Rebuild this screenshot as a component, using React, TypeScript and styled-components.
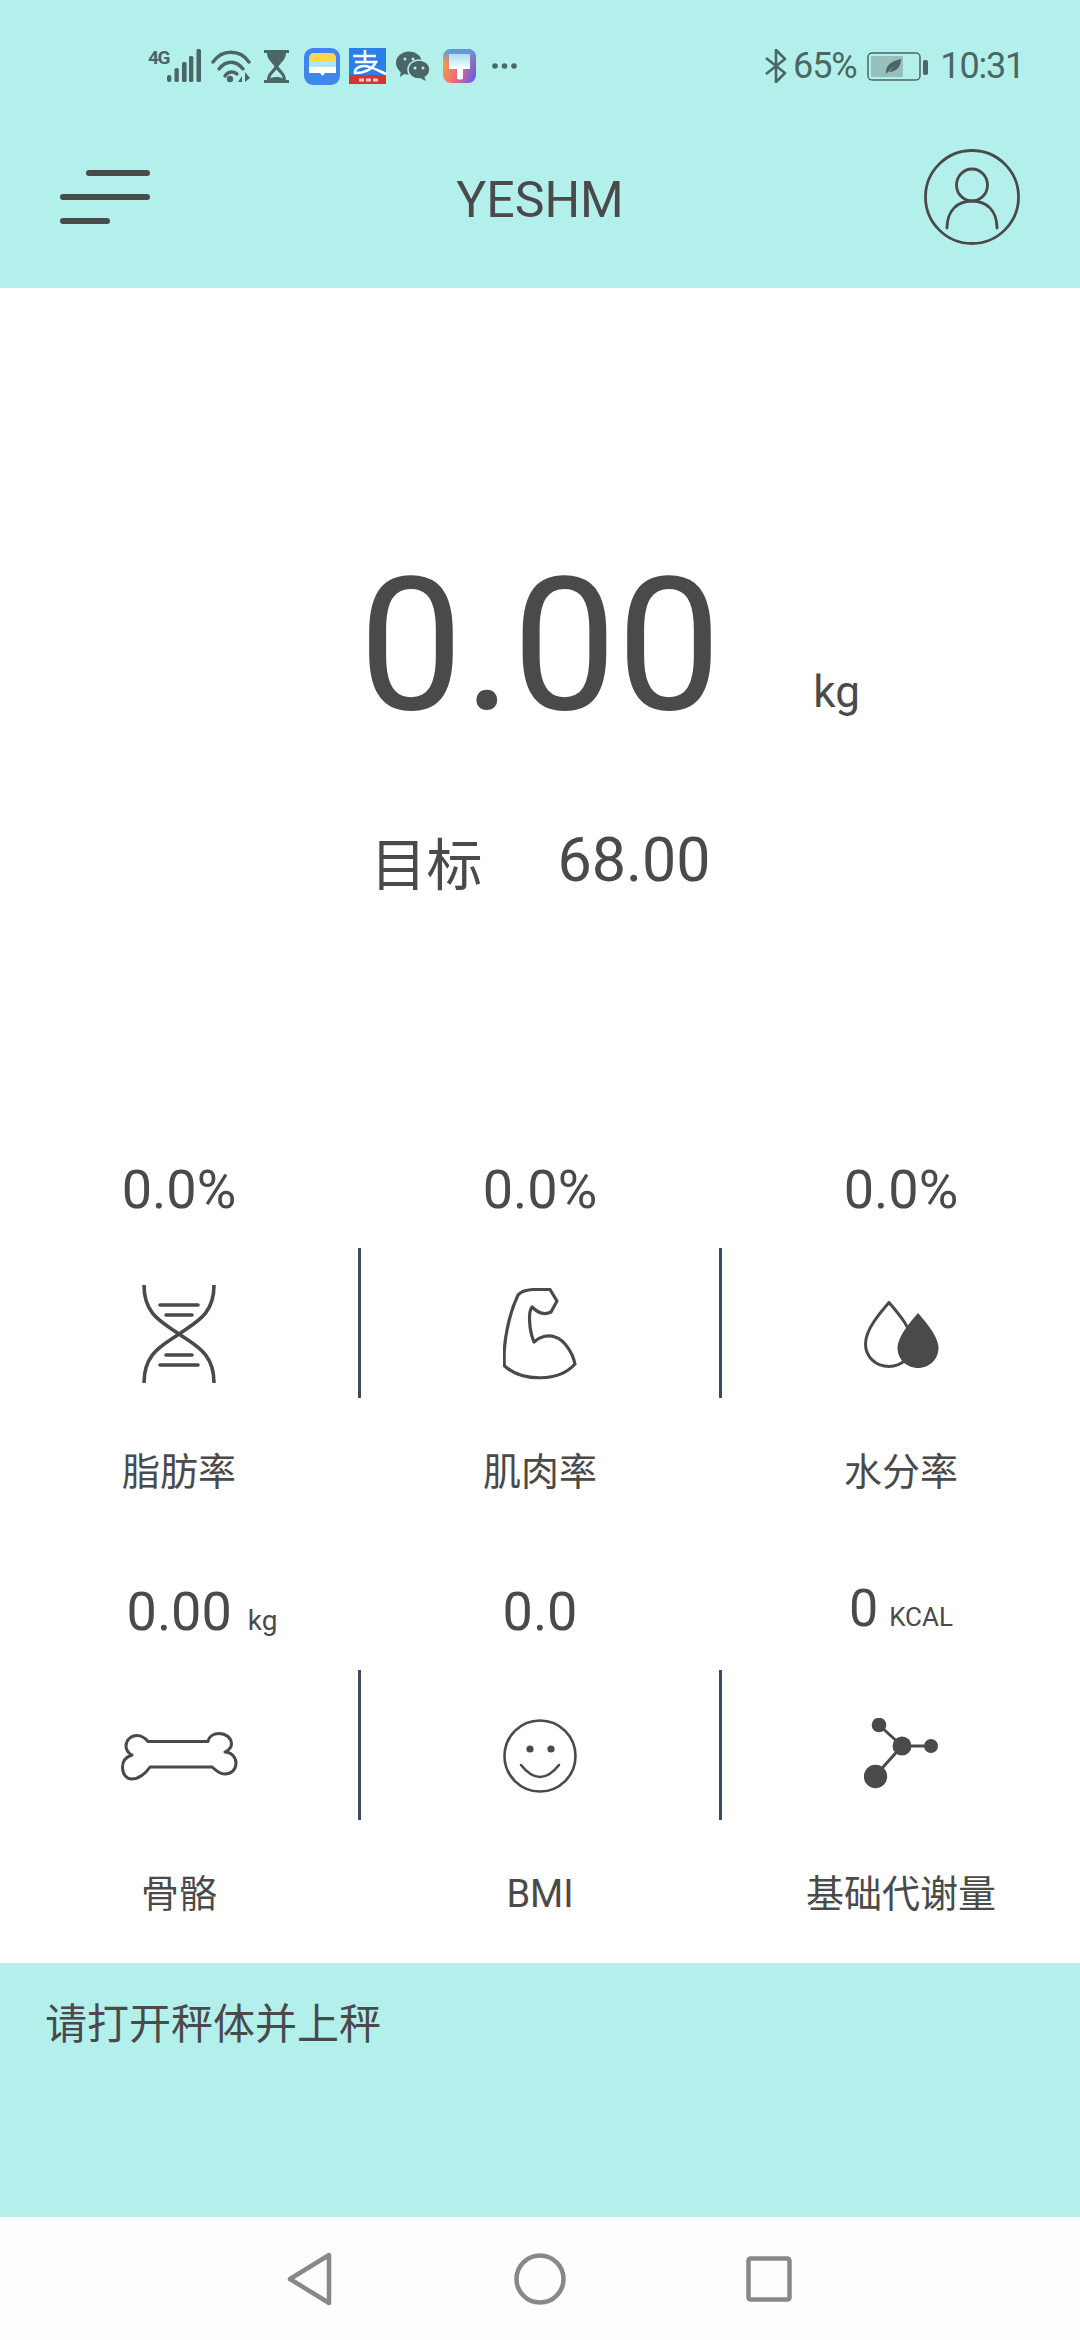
import React from 'react';
import styled, { createGlobalStyle } from 'styled-components';

const GlobalStyle = createGlobalStyle`
  html, body {
    margin: 0;
    padding: 0;
    background: #ffffff;
  }
  * {
    box-sizing: border-box;
  }
`;

const Page = styled.div`
  width: 1080px;
  height: 2340px;
  display: flex;
  flex-direction: column;
  background: #ffffff;
  color: #4a4a4a;
  font-family: Roboto, 'Noto Sans CJK SC', sans-serif;
  overflow: hidden;
`;

const TopBar = styled.header`
  height: 288px;
  background: #b4f0eb;
  display: flex;
  flex-direction: column;
`;

const StatusBar = styled.div`
  height: 132px;
  padding: 0 56px 0 148px;
  display: flex;
  align-items: center;
  justify-content: space-between;
  color: #4a6665;
  font-size: 36px;
  letter-spacing: -1.2px;
`;

const StatusGroup = styled.div`
  display: flex;
  align-items: center;
`;

const StatusSvg = styled.svg<{ $gap?: number }>`
  display: block;
  flex: none;
  margin-left: ${(p) => p.$gap || 0}px;
`;

const StatusText = styled.span<{ $gap?: number }>`
  margin-left: ${(p) => p.$gap || 0}px;
  line-height: 40px;
`;

const NavRow = styled.div`
  height: 130px;
  padding: 0 60px;
  display: grid;
  grid-template-columns: 1fr auto 1fr;
  align-items: center;
`;

const AvatarSlot = styled.div`
  display: flex;
  justify-content: flex-end;
`;

const Title = styled.div`
  font-size: 50px;
  line-height: 60px;
  padding-top: 6px;
`;

const Hero = styled.section`
  height: 869px;
  padding-top: 257px;
  display: flex;
  flex-direction: column;
`;

const WeightRow = styled.div`
  display: grid;
  grid-template-columns: 1fr auto 1fr;
  height: 200px;
`;

const WeightValue = styled.div`
  font-size: 186px;
  line-height: 200px;
`;

const WeightUnit = styled.div`
  font-size: 44px;
  line-height: 50px;
  margin: 122px 0 0 92px;
`;

const TargetRow = styled.div`
  margin-top: 75px;
  display: flex;
  justify-content: center;
  align-items: center;
  gap: 75px;
  height: 80px;
  padding-left: 1px;
`;

const TargetLabel = styled.span`
  font-size: 56px;
`;

const TargetValue = styled.span`
  font-size: 61px;
`;

const MetricGrid = styled.section`
  display: grid;
  grid-template-columns: 361px 361px 358px;
  row-gap: 77px;
`;

const Metric = styled.div`
  display: flex;
  flex-direction: column;
  align-items: stretch;
  text-align: center;
`;

const MetricValue = styled.div<{ $last?: boolean; $small?: boolean }>`
  height: 60px;
  line-height: ${(p) => (p.$small ? 60 : 66)}px;
  font-size: ${(p) => (p.$small ? 52 : 54)}px;
  padding-right: ${(p) => (p.$last ? 0 : 3)}px;
  display: flex;
  justify-content: center;
  align-items: baseline;
  white-space: nowrap;
`;

const MetricUnit = styled.small<{ $gap: number; $hang?: number; $size: number }>`
  font-size: ${(p) => p.$size}px;
  margin-left: ${(p) => p.$gap}px;
  margin-right: ${(p) => -(p.$hang || 0)}px;
`;

const IconSlot = styled.div<{ $last?: boolean }>`
  height: 150px;
  margin-top: 31px;
  padding-top: 22px;
  display: flex;
  align-items: center;
  justify-content: center;
  border-right: ${(p) => (p.$last ? 'none' : '3px solid #3d4a5c')};
`;

const MetricLabel = styled.div<{ $last?: boolean }>`
  height: 60px;
  line-height: 60px;
  margin-top: 44px;
  font-size: 38px;
  padding-right: ${(p) => (p.$last ? 0 : 3)}px;
`;

const MessageBar = styled.section`
  margin-top: 39px;
  height: 254px;
  background: #b4f0eb;
  padding: 32px 45px;
  font-size: 42px;
  line-height: 60px;
`;

const SystemNav = styled.nav`
  flex: 1;
  background: #fdfdfd;
  display: grid;
  grid-template-columns: 227px 46px 181px 52px 180px 46px;
  align-items: center;
  padding-left: 60px;
`;

const SoftKey = styled.svg<{ $col: number }>`
  display: block;
  grid-column: ${(p) => p.$col};
  justify-self: center;
`;

const stroke = { fill: 'none', stroke: '#4a4a4a', strokeLinecap: 'round', strokeLinejoin: 'round' } as const;

const DnaIcon = () => (
  <svg width="74" height="98" viewBox="0 0 74 98" {...stroke} strokeWidth={3.6}>
    <path strokeLinecap="butt" d="M2 0C2 30 20 37 37 49C54 61 72 68 72 98" />
    <path strokeLinecap="butt" d="M72 0C72 30 54 37 37 49C20 61 2 68 2 98" />
    <path d="M18 20H56M24 30H50M24 70H50M18 80H56" />
  </svg>
);

const MuscleIcon = () => (
  <svg width="74" height="92" viewBox="0 0 74 92" {...stroke} strokeWidth={3.2}>
    <path d="M1.500 78C-.5 56 6 26 15 7C19 2 26 1.500 33 1.500H47L54 13L48 24C42 27 35 25 29 19C25 24 26 42 31 54C36 49 45 46 52 49C62 52 70 66 72 76C56 94 20 94 1.500 78Z" />
  </svg>
);

const DropsIcon = () => (
  <svg width="75" height="67" viewBox="0 0 75 67" {...stroke} strokeWidth={3}>
    <path d="M25 1.500C15 13 1.500 29 1.500 43C1.500 56 12 65.500 25 65.500C37 65.500 48.500 56 48.500 43C48.500 29 35 13 25 1.500Z" />
    <path fill="#4a4a4a" stroke="none" d="M54 12C46 21 33.500 36 33.500 47C33.500 58 42.500 67 54 67C65.500 67 74.500 58 74.500 47C74.500 36 62 21 54 12Z" />
  </svg>
);

const BoneIcon = () => (
  <svg width="117" height="49" viewBox="0 0 117 49" {...stroke} strokeWidth={3}>
    <path d="M27 9.500H87C88 4 93 1.500 98 1.500C105 1.500 110.500 6 110.500 12C110.500 16 108 18 104 20C110 20 115 25 115 31C115 38 110 42 104 42C98 42 95 38 91 35H29C25 41 18 47 11 47C5 47 1.500 42 1.500 35C1.500 29 5 25 11 23C7 21 5 18 5 14C5 8 10 3.500 16 3.500C21 3.500 24 6 27 9.500Z" />
  </svg>
);

const SmileIcon = () => (
  <svg width="74" height="74" viewBox="0 0 74 74" {...stroke} strokeWidth={2.600}>
    <circle cx="37" cy="37" r="35.500" />
    <circle cx="27" cy="30" r="3.600" fill="#4a4a4a" stroke="none" />
    <circle cx="48" cy="30" r="3.600" fill="#4a4a4a" stroke="none" />
    <path d="M18 46Q37 70 56 46" />
  </svg>
);

const MoleculeIcon = () => (
  <svg width="75" height="76" viewBox="0 0 75 76" fill="#4a4a4a">
    <path d="M15 7L38 28L11 58M38 28H67" fill="none" stroke="#4a4a4a" strokeWidth={3} />
    <circle cx="38" cy="28" r="9.500" />
    <circle cx="15" cy="7" r="7.300" />
    <circle cx="67" cy="28" r="7" />
    <circle cx="11.500" cy="58.500" r="11.700" />
  </svg>
);

export default function App() {
  return (
    <Page>
      <GlobalStyle />
      <TopBar>
        <StatusBar>
          <StatusGroup>
            <StatusSvg width="53" height="42" viewBox="0 -4 53 42" fill="#4a6665">
              <text x="0" y="15" fontSize="19" fontWeight="700" letterSpacing="-1.500" fontFamily="Roboto, sans-serif">4G</text>
              <rect x="19" y="26" width="4.300" height="7" rx="2" />
              <rect x="26.500" y="19" width="4.300" height="14" rx="1.500" />
              <rect x="34" y="13" width="4.600" height="20" rx="1.500" />
              <rect x="41" y="7" width="4.300" height="26" rx="1.500" />
              <rect x="48.500" y="0" width="4.500" height="33" rx="1.500" />
            </StatusSvg>
            <StatusSvg $gap={10} width="40" height="34" viewBox="0 0 40 34" fill="none" stroke="#4a6665" strokeWidth="3.400" strokeLinecap="round">
              <path d="M2 13C11 0 29 0 38 13" />
              <path d="M8 20C15 11 25 11 32 20" />
              <path d="M14 27C17 22 23 22 26 25" />
              <circle cx="19" cy="30" r="3.200" fill="#4a6665" stroke="none" />
              <path d="M31 23V33H27L31 27M34 23V33L39 29Z" fill="#4a6665" stroke="none" />
            </StatusSvg>
            <StatusSvg $gap={13} width="25" height="33" viewBox="0 0 25 33" fill="#4a6665">
              <rect x="0" y="0" width="25" height="3" />
              <rect x="0" y="30" width="25" height="3" />
              <path d="M3 3H22C22 10 16 13 14.500 16.500C16 20 22 23 22 30H3C3 23 9 20 10.500 16.500C9 13 3 10 3 3Z" />
              <path d="M12.500 19.500C10.500 22 7 24.500 6 28.500C9 26.500 16 26.500 19 28.500C18 24.500 14.500 22 12.500 19.500Z" fill="#b4f0eb" />
            </StatusSvg>
            <StatusSvg $gap={15} width="36" height="37" viewBox="0 0 36 37">
              <rect width="36" height="37" rx="9" fill="#3f87ee" />
              <path d="M5 10C5 7 7 5 10 5H27C30 5 32 7 32 10V13H5Z" fill="#fbd74f" />
              <rect x="5" y="13" width="27" height="6" fill="#b5e3f7" />
              <path d="M5 19H32V25H21L18.500 28L16 25H5Z" fill="#ffffff" />
            </StatusSvg>
            <StatusSvg $gap={9} width="37" height="36" viewBox="0 0 37 36">
              <rect width="37" height="36" fill="#2b7fe6" />
              <rect y="27" width="37" height="9" fill="#d8332f" />
              <path d="M4 8H27M16 2V14M6 14H27C23 22 15 25 6 25C5 21 10 18 15 18C22 18 30 23 37 26" fill="none" stroke="#ffffff" strokeWidth="2.600" />
              <path d="M10 32H15M17 32H22M24 32H29" stroke="#f6c9c8" strokeWidth="3" />
            </StatusSvg>
            <StatusSvg $gap={10} width="34" height="30" viewBox="0 0 34 30">
              <ellipse cx="13" cy="12" rx="13" ry="11.500" fill="#4a6665" />
              <path d="M5 19L4 26L11 21Z" fill="#4a6665" />
              <ellipse cx="23" cy="18.500" rx="11" ry="9.500" fill="#4a6665" stroke="#b4f0eb" strokeWidth="1.500" />
              <path d="M28 25L30 30L24 27Z" fill="#4a6665" />
              <circle cx="9" cy="8" r="1.500" fill="#b4f0eb" />
              <circle cx="17" cy="8" r="1.500" fill="#b4f0eb" />
              <circle cx="19" cy="17" r="1.500" fill="#b4f0eb" />
              <circle cx="27" cy="17" r="1.500" fill="#b4f0eb" />
            </StatusSvg>
            <StatusSvg $gap={13} width="33" height="34" viewBox="0 0 33 34">
              <defs>
                <linearGradient id="brushBg" x1="0" y1="0.300" x2="1" y2="0.700">
                  <stop offset="0" stopColor="#f8a23a" />
                  <stop offset="0.500" stopColor="#ee6a78" />
                  <stop offset="1" stopColor="#6a5fe8" />
                </linearGradient>
                <linearGradient id="brushTop" x1="0" y1="0" x2="0" y2="1">
                  <stop offset="0" stopColor="#4f9cf0" />
                  <stop offset="1" stopColor="#4f9cf0" stopOpacity="0" />
                </linearGradient>
                <linearGradient id="brushHead" x1="0" y1="0" x2="0" y2="1">
                  <stop offset="0" stopColor="#a9dcf6" />
                  <stop offset="0.600" stopColor="#ffffff" />
                </linearGradient>
              </defs>
              <rect width="33" height="34" rx="8" fill="url(#brushBg)" />
              <rect width="33" height="16" rx="8" fill="url(#brushTop)" />
              <path d="M6 5H27V20H20V29C20 31 14 31 14 29V20H6Z" fill="url(#brushHead)" />
            </StatusSvg>
            <StatusSvg $gap={16} width="25" height="6" viewBox="0 0 25 6" fill="#4a6665">
              <circle cx="3" cy="3" r="2.800" />
              <circle cx="12.500" cy="3" r="2.800" />
              <circle cx="22" cy="3" r="2.800" />
            </StatusSvg>
          </StatusGroup>
          <StatusGroup>
            <StatusSvg width="22" height="34" viewBox="0 0 22 34" fill="none" stroke="#4a6665" strokeWidth="2.600" strokeLinejoin="round">
              <path d="M1 9L20 24L11 33V1L20 10L1 25" />
            </StatusSvg>
            <StatusText $gap={6}>65%</StatusText>
            <StatusSvg $gap={11} width="61" height="29" viewBox="0 0 61 29">
              <rect x="1" y="1" width="52" height="27" rx="4" fill="none" stroke="#4a6665" strokeWidth="1.500" />
              <rect x="4" y="4" width="32" height="21" rx="1" fill="#97c0bd" />
              <rect x="56" y="8" width="5" height="15" rx="2" fill="#4a6665" />
              <path d="M19 22C18 14 24 9 34 7C34 15 29 20 22 20L28 13L19 22Z" fill="#4a6665" />
            </StatusSvg>
            <StatusText $gap={12}>10:31</StatusText>
          </StatusGroup>
        </StatusBar>
        <NavRow>
          <svg width="90" height="56" viewBox="0 0 90 56" fill="none" stroke="#4a4a4a" strokeWidth="6" strokeLinecap="round">
            <path d="M29 4H87M3 28H87M3 52H47" />
          </svg>
          <Title>YESHM</Title>
          <AvatarSlot>
            <svg width="96" height="96" viewBox="0 0 96 96" fill="none" stroke="#4a4a4a" strokeWidth="2.800" strokeLinecap="round">
              <circle cx="48" cy="48" r="46.500" />
              <ellipse cx="48" cy="36" rx="15.500" ry="16" />
              <path d="M23 79C23 62 33 52 48 52C63 52 73 62 73 79" />
            </svg>
          </AvatarSlot>
        </NavRow>
      </TopBar>
      <Hero>
        <WeightRow>
          <span />
          <WeightValue>0.00</WeightValue>
          <WeightUnit>kg</WeightUnit>
        </WeightRow>
        <TargetRow>
          <TargetLabel>目标</TargetLabel>
          <TargetValue>68.00</TargetValue>
        </TargetRow>
      </Hero>
      <MetricGrid>
        <Metric>
          <MetricValue>0.0%</MetricValue>
          <IconSlot><DnaIcon /></IconSlot>
          <MetricLabel>脂肪率</MetricLabel>
        </Metric>
        <Metric>
          <MetricValue>0.0%</MetricValue>
          <IconSlot><MuscleIcon /></IconSlot>
          <MetricLabel>肌肉率</MetricLabel>
        </Metric>
        <Metric>
          <MetricValue $last>0.0%</MetricValue>
          <IconSlot $last><DropsIcon /></IconSlot>
          <MetricLabel $last>水分率</MetricLabel>
        </Metric>
        <Metric>
          <MetricValue>0.00<MetricUnit $gap={16} $hang={46} $size={28}>kg</MetricUnit></MetricValue>
          <IconSlot><BoneIcon /></IconSlot>
          <MetricLabel>骨骼</MetricLabel>
        </Metric>
        <Metric>
          <MetricValue>0.0</MetricValue>
          <IconSlot><SmileIcon /></IconSlot>
          <MetricLabel>BMI</MetricLabel>
        </Metric>
        <Metric>
          <MetricValue $last $small>0<MetricUnit $gap={11} $size={26}>KCAL</MetricUnit></MetricValue>
          <IconSlot $last><MoleculeIcon /></IconSlot>
          <MetricLabel $last>基础代谢量</MetricLabel>
        </Metric>
      </MetricGrid>
      <MessageBar>请打开秤体并上秤</MessageBar>
      <SystemNav>
        <SoftKey $col={2} width="46" height="56" viewBox="0 0 46 56" fill="none" stroke="#888888" strokeWidth="4.500" strokeLinejoin="round">
          <path d="M42 4V52L3 28Z" />
        </SoftKey>
        <SoftKey $col={4} width="52" height="52" viewBox="0 0 52 52" fill="none" stroke="#888888" strokeWidth="4.500">
          <circle cx="26" cy="26" r="23.500" />
        </SoftKey>
        <SoftKey $col={6} width="46" height="46" viewBox="0 0 46 46" fill="none" stroke="#888888" strokeWidth="4.500" strokeLinejoin="round">
          <rect x="2.500" y="2.500" width="41" height="41" rx="2" />
        </SoftKey>
      </SystemNav>
    </Page>
  );
}
